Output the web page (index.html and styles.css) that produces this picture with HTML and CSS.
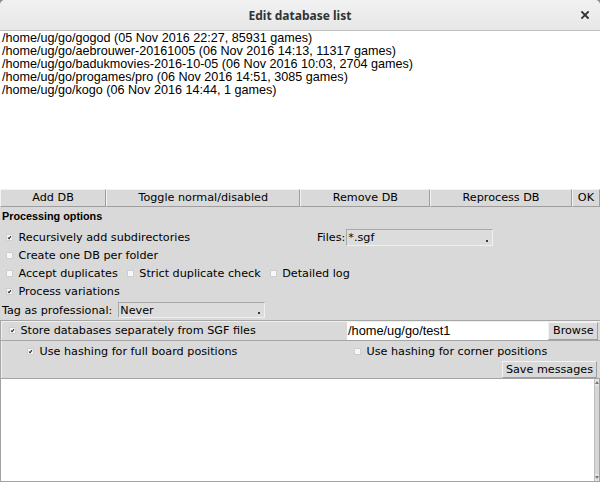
FILE: index.html
```html
<!DOCTYPE html>
<html>
<head>
<meta charset="utf-8">
<title>Edit database list</title>
<link rel="stylesheet" href="styles.css">
</head>
<body>
<div class="window">
  <header class="titlebar">
    <span></span>
    <span class="title">Edit database list</span>
    <span class="close-wrap">
      <svg class="close" viewBox="0 0 8 8" width="8" height="8"><path d="M1 1L7 7M7 1L1 7" stroke="#2e3436" stroke-width="1.8" stroke-linecap="square"/></svg>
    </span>
  </header>

  <div class="dblist">
    <div>/home/ug/go/gogod (05 Nov 2016 22:27, 85931 games)</div>
    <div>/home/ug/go/aebrouwer-20161005 (06 Nov 2016 14:13, 11317 games)</div>
    <div>/home/ug/go/badukmovies-2016-10-05 (06 Nov 2016 10:03, 2704 games)</div>
    <div>/home/ug/go/progames/pro (06 Nov 2016 14:51, 3085 games)</div>
    <div>/home/ug/go/kogo (06 Nov 2016 14:44, 1 games)</div>
  </div>

  <div class="btnrow">
    <button class="btn grow">Add DB</button>
    <button class="btn grow">Toggle normal/disabled</button>
    <button class="btn grow">Remove DB</button>
    <button class="btn grow">Reprocess DB</button>
    <button class="btn">OK</button>
  </div>

  <div class="options">
    <div class="heading">Processing options</div>
    <div class="row">
      <label class="cbi wide"><span class="cb on"><svg viewBox="0 0 5 5"><path d="M1 2.6L2.1 3.7L4 1.2"/></svg></span>Recursively add subdirectories</label>
      <span class="lbl">Files:</span>
      <span class="menu files">*.sgf<i class="ind"></i></span>
    </div>
    <div class="row">
      <label class="cbi"><span class="cb"></span>Create one DB per folder</label>
    </div>
    <div class="row">
      <label class="cbi"><span class="cb"></span>Accept duplicates</label>
      <label class="cbi"><span class="cb"></span>Strict duplicate check</label>
      <label class="cbi"><span class="cb"></span>Detailed log</label>
    </div>
    <div class="row">
      <label class="cbi"><span class="cb on"><svg viewBox="0 0 5 5"><path d="M1 2.6L2.1 3.7L4 1.2"/></svg></span>Process variations</label>
    </div>
    <div class="row tagrow">
      <span class="lbl">Tag as professional:</span>
      <span class="menu never">Never<i class="ind"></i></span>
    </div>
  </div>

  <div class="lower">
    <div class="store">
      <label class="cbi storecb"><span class="cb on"><svg viewBox="0 0 5 5"><path d="M1 2.6L2.1 3.7L4 1.2"/></svg></span>Store databases separately from SGF files</label>
      <span class="entry">/home/ug/go/test1</span>
      <button class="btn browse">Browse</button>
    </div>
    <div class="hashing">
      <label class="cbi"><span class="cb on"><svg viewBox="0 0 5 5"><path d="M1 2.6L2.1 3.7L4 1.2"/></svg></span>Use hashing for full board positions</label>
      <label class="cbi"><span class="cb"></span>Use hashing for corner positions</label>
    </div>
    <div class="saverow">
      <button class="btn save">Save messages</button>
    </div>
  </div>

  <div class="messages">
    <div class="msgtext"></div>
    <div class="scrollbar">
      <span class="arrow up"></span>
      <span class="trough"></span>
      <span class="arrow down"></span>
    </div>
  </div>
</div>
</body>
</html>
```

FILE: styles.css
```css
* {
  box-sizing: border-box;
  margin: 0;
  padding: 0;
}

html, body {
  width: 600px;
  height: 482px;
  overflow: hidden;
  background: #8c8c8c;
}

body {
  font-family: "DejaVu Sans", sans-serif;
  font-size: 11.2px;
  color: #000;
}

.window {
  display: flex;
  flex-direction: column;
  height: 482px;
  background: #d9d9d9;
  border-radius: 5px 5px 0 0;
  overflow: hidden;
}

/* title bar */
.titlebar {
  flex: none;
  height: 31px;
  display: grid;
  grid-template-columns: 1fr auto 1fr;
  align-items: center;
  background: linear-gradient(#f1f1f1, #e7e7e7);
  border-bottom: 1px solid #c2c2c2;
}

.title {
  font-family: "Noto Sans", sans-serif;
  font-weight: 700;
  font-size: 12px;
  color: #2e3436;
}

.close-wrap {
  justify-self: end;
  display: flex;
  padding-right: 11px;
  padding-bottom: 1px;
}

.close {
  display: block;
}

/* database list */
.dblist {
  flex: none;
  height: 158px;
  background: #fff;
  font-family: "Liberation Sans", sans-serif;
  font-size: 12.6px;
  line-height: 13px;
  padding: 1px 0 0 2px;
  white-space: nowrap;
}

/* buttons */
.btn {
  font-family: "DejaVu Sans", sans-serif;
  font-size: 11.2px;
  color: #000;
  background: #d9d9d9;
  border: 1px solid;
  border-color: #f2f2f2 #9e9e9e #9e9e9e #f2f2f2;
  padding: 0 5px;
  height: 18px;
  line-height: 16px;
  white-space: nowrap;
}

.btnrow {
  flex: none;
  height: 18px;
  display: flex;
}

.btnrow .btn {
  flex: none;
}

.btnrow .grow {
  flex: 1 1 auto;
}

/* processing options */
.options {
  flex: none;
  padding-left: 2px;
}

.heading {
  height: 21px;
  line-height: 19px;
  font-family: "Liberation Sans", sans-serif;
  font-weight: 700;
  font-size: 10.8px;
}

.row {
  height: 18px;
  display: flex;
  align-items: center;
  white-space: nowrap;
}

.cbi {
  display: flex;
  align-items: center;
  padding: 0 5px 0 5px;
  white-space: nowrap;
}

.cbi.wide {
  width: 315px;
}

.cb {
  flex: none;
  width: 5px;
  height: 5px;
  margin-right: 6.5px;
  background: #f7f7f7;
  box-shadow: 0 0 0 0.5px #c4c4c4;
  display: flex;
}

.cb svg {
  width: 5px;
  height: 5px;
  display: block;
}

.cb svg path {
  fill: none;
  stroke: #2a2a2a;
  stroke-width: 1.1;
}

.lbl {
  white-space: nowrap;
}

.menu {
  display: flex;
  align-items: center;
  height: 17px;
  border: 1px solid;
  border-color: #a9a9a9 #f0f0f0 #f0f0f0 #a9a9a9;
  background: #dcdcdc;
  padding-left: 1px;
}

.menu .ind {
  margin-left: auto;
  align-self: flex-end;
  width: 2px;
  height: 2px;
  background: #3a3a3a;
  margin-right: 4px;
  margin-bottom: 3px;
}

.files {
  width: 147px;
  margin-left: 1px;
}

.tagrow {
  height: 20px;
}

.never {
  width: 147px;
  height: 16px;
  margin-left: 6px;
}

/* lower frame */
.lower {
  flex: none;
  border-top: 1px solid #a6a6a6;
  border-left: 1px solid #a6a6a6;
  box-shadow: inset 1px 1px 0 #f0f0f0;
}

.store {
  height: 20px;
  display: flex;
  align-items: center;
  border-bottom: 1px solid #a6a6a6;
  padding-right: 2px;
}

.storecb {
  flex: 1;
  padding-left: 9px;
}

.storecb .cb {
  margin-right: 5.5px;
}

.entry {
  width: 201px;
  height: 18px;
  background: #fff;
  font-family: "Liberation Sans", sans-serif;
  font-size: 12.8px;
  line-height: 18px;
  padding-left: 1px;
  white-space: nowrap;
}

.browse {
  width: 50px;
  padding: 0 4px;
}

.hashing {
  height: 20px;
  display: grid;
  grid-template-columns: 327px auto;
  align-items: center;
  padding-left: 22px;
}

.saverow {
  height: 17px;
  display: flex;
  justify-content: flex-end;
  padding-right: 3px;
}

.save {
  height: 17px;
  line-height: 15px;
  padding: 0 3px;
}

/* messages */
.messages {
  flex: 1;
  display: flex;
  background: #fff;
  border: 1px solid #a3a3a3;
}

.msgtext {
  flex: 1;
}

.scrollbar {
  flex: none;
  width: 5px;
  display: flex;
  flex-direction: column;
  background: #d9d9d9;
  border-left: 1px solid #bdbdbd;
}

.trough {
  flex: 1;
  background: #d6d6d6;
}

.arrow {
  height: 7px;
  background: #e4e4e4;
  display: flex;
  align-items: center;
  justify-content: center;
}

.arrow::after {
  content: "";
  border-left: 2px solid transparent;
  border-right: 2px solid transparent;
}

.arrow.up::after {
  border-bottom: 3px solid #777;
}

.arrow.down::after {
  border-top: 3px solid #777;
}
```
